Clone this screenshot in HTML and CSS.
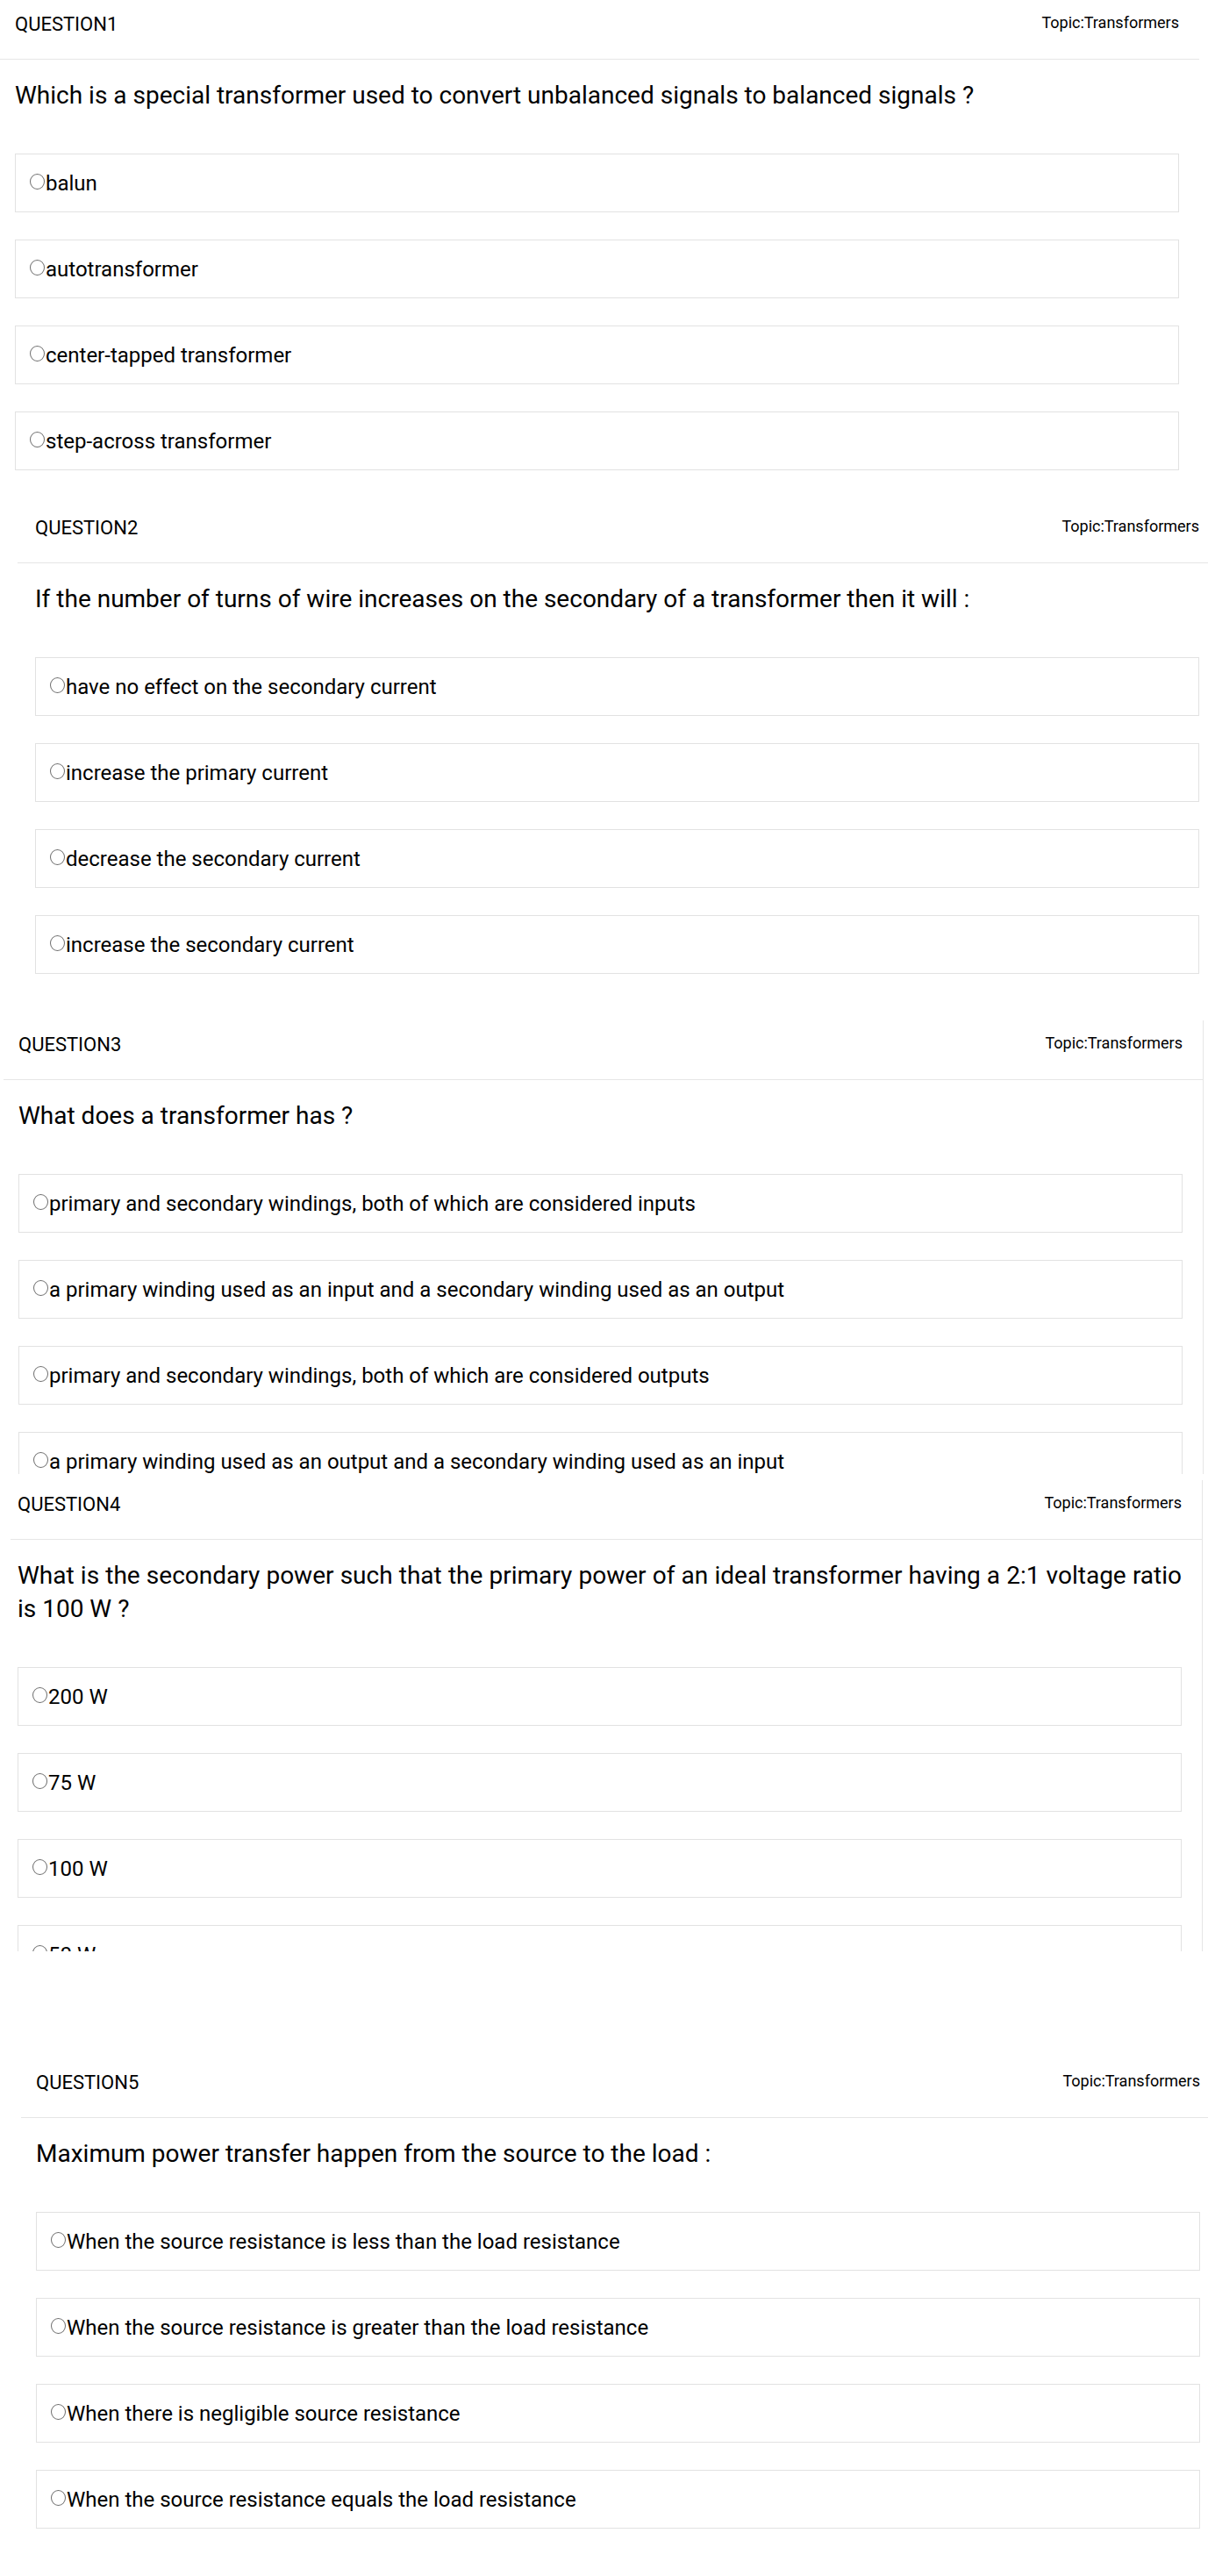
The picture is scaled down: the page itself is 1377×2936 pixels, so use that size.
FILE: index.html
```html
<!DOCTYPE html>
<html lang="en">
<head>
<meta charset="utf-8">
<title>Transformers quiz</title>
<link rel="stylesheet" href="styles.css">
</head>
<body>
<main class="quiz">

  <section class="card card-1">
    <header class="card-head">
      <h2 class="q-num">QUESTION1</h2>
      <span class="q-topic">Topic:Transformers</span>
    </header>
    <div class="card-body">
      <p class="q-text">Which is a special transformer used to convert unbalanced signals to balanced signals ?</p>
      <ul class="opts">
        <li class="opt"><span class="radio"></span>balun</li>
        <li class="opt"><span class="radio"></span>autotransformer</li>
        <li class="opt"><span class="radio"></span>center-tapped transformer</li>
        <li class="opt"><span class="radio"></span>step-across transformer</li>
      </ul>
    </div>
  </section>

  <section class="card card-2">
    <header class="card-head">
      <h2 class="q-num">QUESTION2</h2>
      <span class="q-topic">Topic:Transformers</span>
    </header>
    <div class="card-body">
      <p class="q-text">If the number of turns of wire increases on the secondary of a transformer then it will :</p>
      <ul class="opts">
        <li class="opt"><span class="radio"></span>have no effect on the secondary current</li>
        <li class="opt"><span class="radio"></span>increase the primary current</li>
        <li class="opt"><span class="radio"></span>decrease the secondary current</li>
        <li class="opt"><span class="radio"></span>increase the secondary current</li>
      </ul>
    </div>
  </section>

  <section class="card card-3 card-boxed">
    <header class="card-head">
      <h2 class="q-num">QUESTION3</h2>
      <span class="q-topic">Topic:Transformers</span>
    </header>
    <div class="card-body">
      <p class="q-text">What does a transformer has ?</p>
      <ul class="opts">
        <li class="opt"><span class="radio"></span>primary and secondary windings, both of which are considered inputs</li>
        <li class="opt"><span class="radio"></span>a primary winding used as an input and a secondary winding used as an output</li>
        <li class="opt"><span class="radio"></span>primary and secondary windings, both of which are considered outputs</li>
        <li class="opt"><span class="radio"></span>a primary winding used as an output and a secondary winding used as an input</li>
      </ul>
    </div>
  </section>

  <section class="card card-4 card-boxed">
    <header class="card-head">
      <h2 class="q-num">QUESTION4</h2>
      <span class="q-topic">Topic:Transformers</span>
    </header>
    <div class="card-body">
      <p class="q-text">What is the secondary power such that the primary power of an ideal transformer having a 2:1 voltage ratio is 100 W ?</p>
      <ul class="opts">
        <li class="opt"><span class="radio"></span>200 W</li>
        <li class="opt"><span class="radio"></span>75 W</li>
        <li class="opt"><span class="radio"></span>100 W</li>
        <li class="opt"><span class="radio"></span>50 W</li>
      </ul>
    </div>
  </section>

  <section class="card card-5">
    <header class="card-head">
      <h2 class="q-num">QUESTION5</h2>
      <span class="q-topic">Topic:Transformers</span>
    </header>
    <div class="card-body">
      <p class="q-text">Maximum power transfer happen from the source to the load :</p>
      <ul class="opts">
        <li class="opt"><span class="radio"></span>When the source resistance is less than the load resistance</li>
        <li class="opt"><span class="radio"></span>When the source resistance is greater than the load resistance</li>
        <li class="opt"><span class="radio"></span>When there is negligible source resistance</li>
        <li class="opt"><span class="radio"></span>When the source resistance equals the load resistance</li>
      </ul>
    </div>
  </section>

</main>
</body>
</html>
```

FILE: styles.css
```css
html,
body {
  margin: 0;
  padding: 0;
  background: #ffffff;
  overflow-x: hidden;
}

body {
  font-family: Roboto, "Noto Sans", "Liberation Sans", sans-serif;
  color: #000000;
}

.quiz {
  display: flex;
  flex-direction: column;
  align-items: flex-start;
  padding-bottom: 54px;
}

.card {
  flex: none;
  width: 1370px;
  box-sizing: border-box;
  background: #ffffff;
}

.card-boxed {
  width: 1371px;
  overflow: hidden;
  border-right: 1px solid #e6e6e6;
}

.card-1 {
  margin-left: -3px;
}

.card-2 {
  margin-left: 20px;
  margin-top: 38px;
}

.card-3 {
  margin-left: 1px;
  margin-top: 53px;
  height: 517px;
}

.card-4 {
  margin-left: 0;
  margin-top: 7px;
  height: 537px;
}

.card-5 {
  margin-left: 21px;
  margin-top: 122px;
}

/* header row with the divider rule */
.card-head {
  display: flex;
  justify-content: space-between;
  align-items: flex-start;
  height: 68px;
  box-sizing: border-box;
  margin-left: 3px;
  padding: 15px 23px 0 17px;
  border-bottom: 1px solid #e6e6e6;
}

.card-2 .card-head {
  margin-left: 0;
  padding-left: 20px;
}

.card-4 .card-head {
  margin-left: 12px;
  padding-left: 8px;
}

.q-num {
  margin: 0;
  font-size: 22px;
  font-weight: 400;
  line-height: normal;
}

.q-topic {
  font-size: 18px;
  line-height: normal;
}

.card-body {
  padding: 22px 23px 0 20px;
}

.q-text {
  margin: 0 0 47px;
  font-size: 28px;
  line-height: 38px;
  text-align: justify;
}

.opts {
  list-style: none;
  margin: 0;
  padding: 0;
  display: flex;
  flex-direction: column;
  gap: 31px;
}

.opt {
  height: 67px;
  box-sizing: border-box;
  border: 1px solid #e2e2e2;
  padding: 18.5px 15.5px 0;
  font-size: 24px;
  line-height: 28px;
  white-space: nowrap;
}

.radio {
  display: inline-block;
  width: 17px;
  height: 18px;
  box-sizing: border-box;
  border: 1.8px solid #6e6e6e;
  border-radius: 50%;
  vertical-align: 1px;
  margin-right: 1.5px;
}
```
